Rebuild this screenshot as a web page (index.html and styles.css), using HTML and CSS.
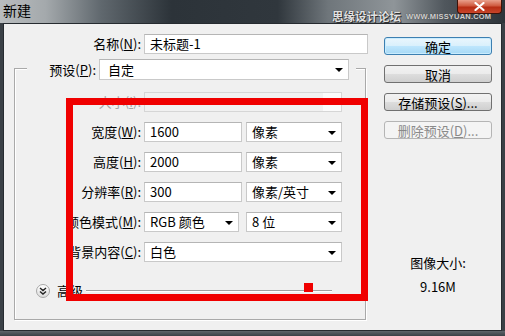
FILE: index.html
```html
<!DOCTYPE html>
<html lang="zh-CN">
<head>
    <meta charset="UTF-8">
    <title>新建</title>
    <link rel="stylesheet" href="styles.css">
</head>
<body>
    <div class="window">
        <!-- Title bar -->
        <div class="titlebar">
            <span class="title">新建</span>
            <span class="close">
                <svg width="11" height="9" viewBox="0 0 11 9"><path d="M1.5 1 L9.5 8 M9.5 1 L1.5 8" stroke="#fff" stroke-width="2.2" stroke-linecap="round"/></svg>
            </span>
        </div>

        <div class="dialog">
            <div class="main">
                <div class="name-row">
                    <label class="label">名称(<u>N</u>):</label>
                    <div class="field name-field">未标题-1</div>
                </div>

                <!-- Preset group -->
                <div class="group">
                    <div class="group-head">
                        <label class="label head-label">预设(<u>P</u>):</label>
                        <div class="field select preset">自定</div>
                    </div>
                    <div class="rows">
                        <div class="row">
                            <label class="label disabled">大小(<u>I</u>):</label>
                            <div class="field wide off"></div>
                        </div>
                        <div class="row">
                            <label class="label">宽度(<u>W</u>):</label>
                            <div class="field num">1600</div>
                            <div class="field select unit">像素</div>
                        </div>
                        <div class="row">
                            <label class="label">高度(<u>H</u>):</label>
                            <div class="field num">2000</div>
                            <div class="field select unit">像素</div>
                        </div>
                        <div class="row">
                            <label class="label">分辨率(<u>R</u>):</label>
                            <div class="field num">300</div>
                            <div class="field select unit">像素/英寸</div>
                        </div>
                        <div class="row">
                            <label class="label">颜色模式(<u>M</u>):</label>
                            <div class="field select mode">RGB 颜色</div>
                            <div class="field select unit">8 位</div>
                        </div>
                        <div class="row">
                            <label class="label">背景内容(<u>C</u>):</label>
                            <div class="field select wide">白色</div>
                        </div>
                    </div>
                    <div class="advanced">
                        <span class="toggle">
                            <svg width="8" height="8" viewBox="0 0 8 8"><path d="M1 1 L4 3.5 L7 1 M1 4.5 L4 7 L7 4.5" fill="none" stroke="#222" stroke-width="1.4"/></svg>
                        </span>
                        <span class="adv-text">高级</span>
                        <span class="etch"></span>
                    </div>
                </div>
            </div>

            <!-- Buttons -->
            <div class="side">
                <button class="btn default">确定</button>
                <button class="btn">取消</button>
                <button class="btn">存储预设(<u>S</u>)...</button>
                <button class="btn" disabled>删除预设(<u>D</u>)...</button>
                <p class="info">图像大小:</p>
                <p class="info size">9.16M</p>
            </div>
        </div>
        <div class="frame-bottom"></div>

        <!-- overlays -->
        <div class="watermark"><span class="wm-cn">思缘设计论坛</span><span class="wm-en">WWW.MISSYUAN.COM</span></div>
        <div class="highlight"></div>
        <div class="marker"></div>
    </div>
</body>
</html>
```

FILE: styles.css
```css
* { box-sizing: border-box; margin: 0; padding: 0; }
body { width: 505px; height: 336px; overflow: hidden; background: #3a4046; font-family: "Noto Sans CJK SC", "Noto Sans", sans-serif; font-size: 13px; color: #000; }
u { text-decoration: underline; text-underline-offset: 1px; }

.window { position: relative; width: 505px; height: 336px; }

/* Title bar */
.titlebar {
    height: 23px; display: flex; align-items: flex-start;
    background: linear-gradient(90deg, #b9bdbf 0%, #a4a9ac 9%, #60686e 20%, #2c3339 34%, #30373d 55%, #6f767b 65%, #8f9599 78%, #50575d 88%, #2d3339 100%);
}
.title { padding: 1px 0 0 3px; font-size: 14px; line-height: 18px; color: #000; }
.close {
    display: flex; align-items: center; justify-content: center;
    margin: 0 3px 0 auto; width: 45px; height: 14px; border: 1px solid #3d1208; border-top: none;
    border-radius: 0 0 4px 4px; background: linear-gradient(#e9a08c, #cf5a3f 45%, #b72d14 55%, #c8452a);
}

.watermark { position: absolute; left: 332px; top: 9px; display: flex; align-items: center; gap: 5px; }
.wm-cn { font-size: 11.5px; line-height: 14px; font-weight: bold; color: #e2e2e2; text-shadow: 0 0 1px #222, 1px 1px 0 #333; }
.wm-en { font: bold 7.5px/10px "Liberation Sans", sans-serif; color: #d0d0d0; letter-spacing: 0.2px; text-shadow: 0 0 1px #333; padding-top: 2px; }

/* Dialog body */
.dialog { display: flex; height: 308px; margin: 0 3px; padding-top: 10px; background: #f0f0f0; border: 1px solid #262b30; }
.frame-bottom { height: 5px; background: linear-gradient(#5e656b, #3a4046); }
.main { width: 366px; }

.label { text-align: right; padding-right: 3px; line-height: 20px; white-space: nowrap; }
.label.disabled { color: #a6a6a6; }

.field {
    position: relative; height: 20px; padding-left: 5px; line-height: 18px; white-space: nowrap;
    background: #fff; border: 1px solid #c9c9c9; border-top-color: #b5b5b5;
}
.select::after {
    content: ""; position: absolute; right: 5px; top: 8px;
    border-left: 4px solid transparent; border-right: 4px solid transparent; border-top: 4px solid #000;
}

.name-row { display: flex; align-items: center; height: 20px; }
.name-row .label { width: 140px; }
.name-field { width: 224px; }

/* Preset group */
.group {
    width: 352px; height: 252px; margin: 14px 0 0 10px;
    border: 1px solid #a9a9a9; box-shadow: inset 1px 1px 0 #fff, 1px 1px 0 #fff;
}
.group-head { display: flex; align-items: center; width: 329px; height: 21px; margin: -10px 0 0 12px; background: #f0f0f0; }
.head-label { width: 72px; }
.preset { width: 250px; height: 21px; line-height: 19px; padding-left: 8px; }

.rows { display: flex; flex-direction: column; gap: 10px; margin-top: 12px; }
.row { display: flex; align-items: center; height: 20px; }
.row .label { width: 129px; }
.num { width: 98px; margin-right: 4px; }
.unit { width: 96px; }
.mode { width: 95px; margin-right: 7px; }
.wide { width: 198px; }
.off { background: linear-gradient(90deg, #f1f1f1 0 178px, #fbfbfb 178px); border-color: #d6d6d6; }

.advanced { display: flex; align-items: center; height: 14px; margin: 22px 33px 0 21px; }
.toggle {
    width: 14px; height: 14px; border-radius: 50%; border: 1px solid #a8a8a8;
    background: linear-gradient(#ffffff, #dcdcdc); display: flex; align-items: center; justify-content: center;
}
.adv-text { margin-left: 7px; line-height: 16px; }
.etch { flex: 1; height: 2px; margin-left: 3px; border-top: 1px solid #a0a0a0; border-bottom: 1px solid #fff; }

/* Buttons column */
.side { width: 108px; margin-left: 14px; padding-top: 3px; display: flex; flex-direction: column; }
.btn {
    height: 18px; margin-bottom: 10px; font-family: inherit; font-size: 13px; line-height: 15px; color: #000;
    border: 1px solid #707070; border-radius: 3px;
    background: linear-gradient(#f2f2f2 0%, #ebebeb 50%, #dddddd 51%, #cfcfcf 100%);
}
.btn.default { border-color: #3c7fb1; background: linear-gradient(#eaf6fd 0%, #d9f0fc 50%, #bee6fd 51%, #a7d9f5 100%); box-shadow: inset 0 0 0 1px #c9ecfe; }
.btn:disabled { color: #8a8a8a; border-color: #b5b5b5; background: #f4f4f4; }

.info { text-align: center; line-height: 18px; margin-top: 105px; }
.info.size { margin-top: 6px; }

/* Red annotation */
.highlight { position: absolute; left: 66px; top: 98px; width: 302px; height: 203px; border: 7px solid #f00000; }
.marker { position: absolute; left: 304px; top: 283px; width: 9px; height: 9px; background: #f00000; }
```
